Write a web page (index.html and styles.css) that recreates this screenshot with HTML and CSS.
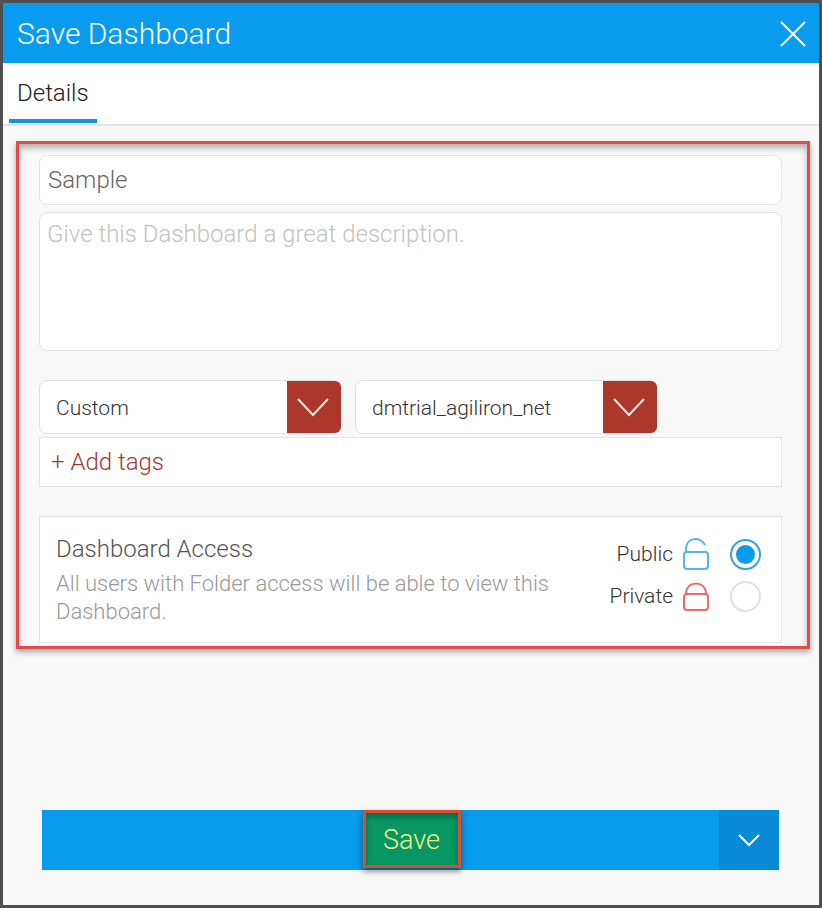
FILE: index.html
```html
<!DOCTYPE html>
<html lang="en">
<head>
    <meta charset="UTF-8">
    <meta name="viewport" content="width=device-width, initial-scale=1.0">
    <title>Save Dashboard</title>
    <link rel="stylesheet" href="styles.css">
</head>
<body>
    <form class="dialog">
        <header>
            <h1>Save Dashboard</h1>
            <button type="button" class="close" aria-label="Close">
                <svg width="28" height="28" viewBox="0 0 28 28"><path d="M2 3L26 27M26 3L2 27"/></svg>
            </button>
        </header>
        <nav class="tabs">
            <a href="#details" class="active">Details</a>
        </nav>

        <main id="details" class="details">
            <input type="text" class="name" value="Sample" aria-label="Dashboard name">
            <textarea class="description" placeholder="Give this Dashboard a great description." aria-label="Description"></textarea>

            <div class="selects">
                <div class="select">
                    <select aria-label="Category">
                        <option>Custom</option>
                    </select>
                    <svg width="54" height="52" viewBox="0 0 54 52"><path d="M11 18L26 34L41 18"/></svg>
                </div>
                <div class="select">
                    <select aria-label="Folder">
                        <option>dmtrial_agiliron_net</option>
                    </select>
                    <svg width="54" height="52" viewBox="0 0 54 52"><path d="M11 18L26 34L41 18"/></svg>
                </div>
            </div>
            <button type="button" class="add-tags">+ Add tags</button>

            <section class="access">
                <div class="access-text">
                    <h2>Dashboard Access</h2>
                    <p>All users with Folder access will be able to view this Dashboard.</p>
                </div>
                <div class="access-options">
                    <label class="public">
                        Public
                        <svg width="28" height="34" viewBox="0 0 28 34"><path d="M4 15V12C4 0 19 -1 23 8"/><rect x="2" y="15" width="24" height="17" rx="3"/></svg>
                        <input type="radio" name="access" value="public" checked>
                    </label>
                    <label class="private">
                        Private
                        <svg width="28" height="34" viewBox="0 0 28 34"><path d="M4 15C4 1 24 1 24 15"/><rect x="2" y="15" width="24" height="16" rx="3"/></svg>
                        <input type="radio" name="access" value="private">
                    </label>
                </div>
            </section>
        </main>

        <footer>
            <button type="submit" class="save"><span>Save</span></button>
            <button type="button" class="save-more" aria-label="More save options">
                <svg width="24" height="16" viewBox="0 0 24 16"><path d="M2 3L12 13L22 3"/></svg>
            </button>
        </footer>
    </form>
</body>
</html>
```
FILE: styles.css
```css
* {
    box-sizing: border-box;
}

body {
    margin: 0;
    font-family: Roboto, "Liberation Sans", sans-serif;
    font-weight: 300;
    color: #333;
}

button, input, select, textarea {
    font: inherit;
    color: inherit;
    margin: 0;
}

button {
    border: 0;
    padding: 0;
    cursor: pointer;
}

svg {
    display: block;
    fill: none;
    stroke: currentColor;
    stroke-width: 2;
}

.dialog {
    display: flex;
    flex-direction: column;
    min-height: 100vh;
    border: 3px solid #4f4f4f;
    background-color: #f9f9f9;
}

header {
    display: flex;
    align-items: center;
    justify-content: space-between;
    height: 60px;
    padding: 0 12px 0 14px;
    background-color: #089bee;
    color: white;
}

h1 {
    margin: 0;
    font-size: 30px;
    font-weight: 300;
}

.close {
    background: none;
    color: white;
}

.tabs {
    display: flex;
    height: 63px;
    padding: 0 6px;
    background-color: white;
    border-bottom: 2px solid #e4e4e4;
}

.tabs a {
    height: 60px;
    padding: 0 8px;
    border-bottom: 4px solid #1494e0;
    font-size: 24px;
    line-height: 60px;
    color: #222;
    text-decoration: none;
}

/* Form area */

.details {
    margin: 15px 9px 24px 13px;
    padding: 11px 25px 3px 20px;
    border: 3px solid #e24b48;
    box-shadow: 0 3px 6px rgba(0, 0, 0, 0.35), inset 0 4px 6px rgba(0, 0, 0, 0.3);
}

.name,
.description {
    display: block;
    width: 100%;
    padding: 0 8px;
    border: 1px solid #e4e4e4;
    border-radius: 8px;
    background-color: white;
    font-size: 24px;
    color: #666;
}

.name {
    height: 50px;
    margin-bottom: 7px;
}

.description {
    height: 139px;
    padding: 7px;
    line-height: 28px;
    resize: none;
}

.description::placeholder {
    color: #c2c2c2;
}

.selects {
    display: flex;
    gap: 14px;
    margin: 29px 0 3px;
}

.select {
    position: relative;
    width: 302px;
}

.select select {
    appearance: none;
    width: 100%;
    height: 54px;
    padding: 2px 60px 0 16px;
    border: 1px solid #e0e0e0;
    border-radius: 8px;
    background-color: white;
    font-size: 21px;
}

.select svg {
    position: absolute;
    top: 1px;
    right: 0;
    border-radius: 0 6px 6px 0;
    background-color: #ab382b;
    color: #fbe6e3;
    pointer-events: none;
}

.add-tags {
    display: block;
    width: 100%;
    height: 50px;
    padding: 0 11px;
    border: 1px solid #e4e4e4;
    background-color: white;
    color: #a5382d;
    font-size: 24px;
    text-align: left;
}

.access {
    display: flex;
    justify-content: space-between;
    gap: 24px;
    margin-top: 29px;
    padding: 16px 20px 16px 16px;
    border: 1px solid #e4e4e4;
    background-color: white;
}

.access-text {
    max-width: 520px;
}

h2 {
    margin: 0 0 5px;
    font-size: 24px;
    font-weight: 300;
    line-height: 32px;
    color: #555;
}

.access p {
    margin: 0;
    font-size: 22px;
    line-height: 28px;
    color: #999;
}

.access-options label {
    display: flex;
    align-items: center;
    justify-content: flex-end;
    height: 42px;
    font-size: 21px;
}

.access-options svg {
    margin: 0 20px 0 9px;
}

.public svg {
    color: #55b2f0;
}

.private svg {
    color: #f06a6a;
}

.access-options input {
    appearance: none;
    width: 31px;
    height: 31px;
    border: 2px solid #e2e2e2;
    border-radius: 50%;
    background-color: white;
}

.access-options input:checked {
    border-color: #3a9fe0;
    background: #089bee content-box;
    padding: 4px;
}

/* Save bar */

footer {
    display: flex;
    height: 60px;
    margin: auto 40px 35px 39px;
}

.save {
    flex: 1;
    padding: 0 0 4px 62px;
    background-color: #089bee;
    color: #f2f285;
    font-size: 27px;
}

.save span {
    display: inline-block;
    width: 98px;
    padding-top: 2px;
    border: 3px solid #d4502e;
    background-color: #079765;
    line-height: 50px;
    box-shadow: 0 3px 6px rgba(0, 0, 0, 0.5), inset 0 4px 6px rgba(0, 0, 0, 0.3);
}

.save-more {
    display: grid;
    place-items: center;
    width: 60px;
    background-color: #088ad6;
    color: white;
}
```
